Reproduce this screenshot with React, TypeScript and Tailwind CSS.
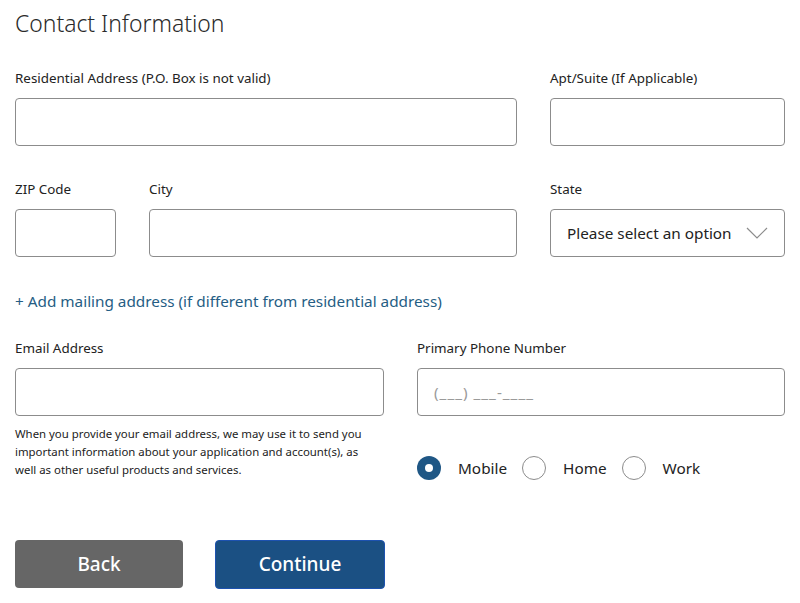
import { useState } from 'react';

const font = { fontFamily: '"Noto Sans", "Open Sans", Arial, sans-serif' };

function Label({ children }: { children: React.ReactNode }) {
  return <label className="block text-[13.4px] leading-[20px] text-[#222] mb-[10px]">{children}</label>;
}

function TextInput({ placeholder }: { placeholder?: string }) {
  return (
    <input
      placeholder={placeholder}
      className="block w-full h-[48px] rounded-[4px] border border-[#8c8c8c] bg-white px-4 text-[15.3px] tracking-[1px] text-[#222] placeholder:text-[#9a9a9a] outline-none"
    />
  );
}

function Radio({ label, checked, onClick }: { label: string; checked: boolean; onClick: () => void }) {
  return (
    <button type="button" onClick={onClick} className="flex items-center gap-[17px]">
      {checked ? (
        <span className="flex h-[24px] w-[24px] items-center justify-center rounded-full bg-[#1f5785]">
          <span className="h-[8px] w-[8px] rounded-full bg-white" />
        </span>
      ) : (
        <span className="h-[24px] w-[24px] rounded-full border border-[#8c8c8c] bg-white" />
      )}
      <span className="text-[15.3px] text-[#222]">{label}</span>
    </button>
  );
}

export default function App() {
  const [phoneType, setPhoneType] = useState('Mobile');

  return (
    <div className="min-h-screen w-[800px] bg-white px-[15px] pt-[7px] pb-4" style={font}>
      <h1 className="text-[22.9px] leading-[34px] font-light text-[#2a2a2a]">Contact Information</h1>

      <div className="mt-[27px] grid grid-cols-[502px_1fr] gap-x-[33px]">
        <div>
          <Label>Residential Address (P.O. Box is not valid)</Label>
          <TextInput />
        </div>
        <div>
          <Label>Apt/Suite (If Applicable)</Label>
          <TextInput />
        </div>
      </div>

      <div className="mt-[33px] grid grid-cols-[101px_368px_1fr] gap-x-[33px]">
        <div>
          <Label>ZIP Code</Label>
          <TextInput />
        </div>
        <div>
          <Label>City</Label>
          <TextInput />
        </div>
        <div>
          <Label>State</Label>
          <button
            type="button"
            className="flex w-full h-[48px] items-center justify-between rounded-[4px] border border-[#8c8c8c] bg-white pl-4 pr-[16px] text-[15.3px] text-[#222]"
          >
            <span>Please select an option</span>
            <svg width="22" height="12" viewBox="0 0 22 12" fill="none">
              <path d="M1 1l10 10L21 1" stroke="#8c8c8c" strokeWidth="1.2" />
            </svg>
          </button>
        </div>
      </div>

      <a href="#" className="mt-[32px] block text-[15.3px] leading-[24px] text-[#255d84]">
        + Add mailing address (if different from residential address)
      </a>

      <div className="mt-[25px] grid grid-cols-[369px_1fr] gap-x-[33px]">
        <div>
          <Label>Email Address</Label>
          <TextInput />
          <p className="mt-[9px] pr-4 text-[11.4px] leading-[18px] text-[#222]">
            When you provide your email address, we may use it to send you important information about your
            application and account(s), as well as other useful products and services.
          </p>
        </div>
        <div>
          <Label>Primary Phone Number</Label>
          <TextInput placeholder="(___) ___-____" />
          <div className="mt-[40px] flex items-center gap-[15px]">
            {['Mobile', 'Home', 'Work'].map((t) => (
              <Radio key={t} label={t} checked={phoneType === t} onClick={() => setPhoneType(t)} />
            ))}
          </div>
        </div>
      </div>

      <div className="mt-[60px] flex gap-[32px]">
        <button type="button" className="h-[48px] w-[168px] rounded-[4px] bg-[#666666] text-[19px] font-medium text-white">
          Back
        </button>
        <button
          type="button"
          className="h-[49px] w-[170px] rounded-[4px] border border-[#1d52b0] bg-[#1b5083] text-[19px] font-medium text-white"
        >
          Continue
        </button>
      </div>
    </div>
  );
}
